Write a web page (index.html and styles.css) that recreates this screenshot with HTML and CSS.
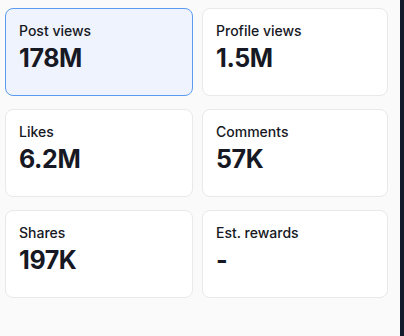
FILE: index.html
```html
<!DOCTYPE html>
<html lang="en">
<head>
    <meta charset="UTF-8">
    <meta name="viewport" content="width=device-width, initial-scale=1.0">
    <title>Analytics - Overview</title>
    <link rel="stylesheet" href="styles.css">
</head>
<body>
    <div class="page">
        <div class="stats-grid">
            <div class="stat-card active">
                <div class="stat-label">Post views</div>
                <div class="stat-value">178M</div>
            </div>
            <div class="stat-card">
                <div class="stat-label">Profile views</div>
                <div class="stat-value">1.5M</div>
            </div>
            <div class="stat-card">
                <div class="stat-label">Likes</div>
                <div class="stat-value">6.2M</div>
            </div>
            <div class="stat-card">
                <div class="stat-label">Comments</div>
                <div class="stat-value">57K</div>
            </div>
            <div class="stat-card">
                <div class="stat-label">Shares</div>
                <div class="stat-value">197K</div>
            </div>
            <div class="stat-card">
                <div class="stat-label">Est. rewards</div>
                <div class="stat-value">-</div>
            </div>
        </div>
    </div>
    <div class="edge"></div>
</body>
</html>
```

FILE: styles.css
```css
/* General styles */
html, body {
    height: 100%;
}

body {
    font-family: Inter, "Liberation Sans", Arial, sans-serif;
    margin: 0;
    padding: 0;
    display: flex;
    background-color: #121b2b;
    color: #161823;
}

.page {
    width: 400px;
    height: 100%;
    background-color: #fafafa;
    padding: 8px 12px 0 5px;
    box-sizing: border-box;
}

.edge {
    flex: 1;
}

/* Stat cards */
.stats-grid {
    display: grid;
    grid-template-columns: 188px 186px;
    column-gap: 9px;
    row-gap: 13px;
}

.stat-card {
    height: 88px;
    box-sizing: border-box;
    padding: 13px 13px;
    background-color: #fff;
    border: 1px solid #e9e9eb;
    border-radius: 8px;
}

.stat-card.active {
    background-color: #eef3fd;
    border-color: #5c9bf0;
}

.stat-label {
    font-size: 14px;
    font-weight: 500;
    line-height: 18px;
}

.stat-value {
    font-size: 25px;
    font-weight: 700;
    line-height: 30px;
    margin-top: 3px;
    letter-spacing: -0.4px;
}
```
